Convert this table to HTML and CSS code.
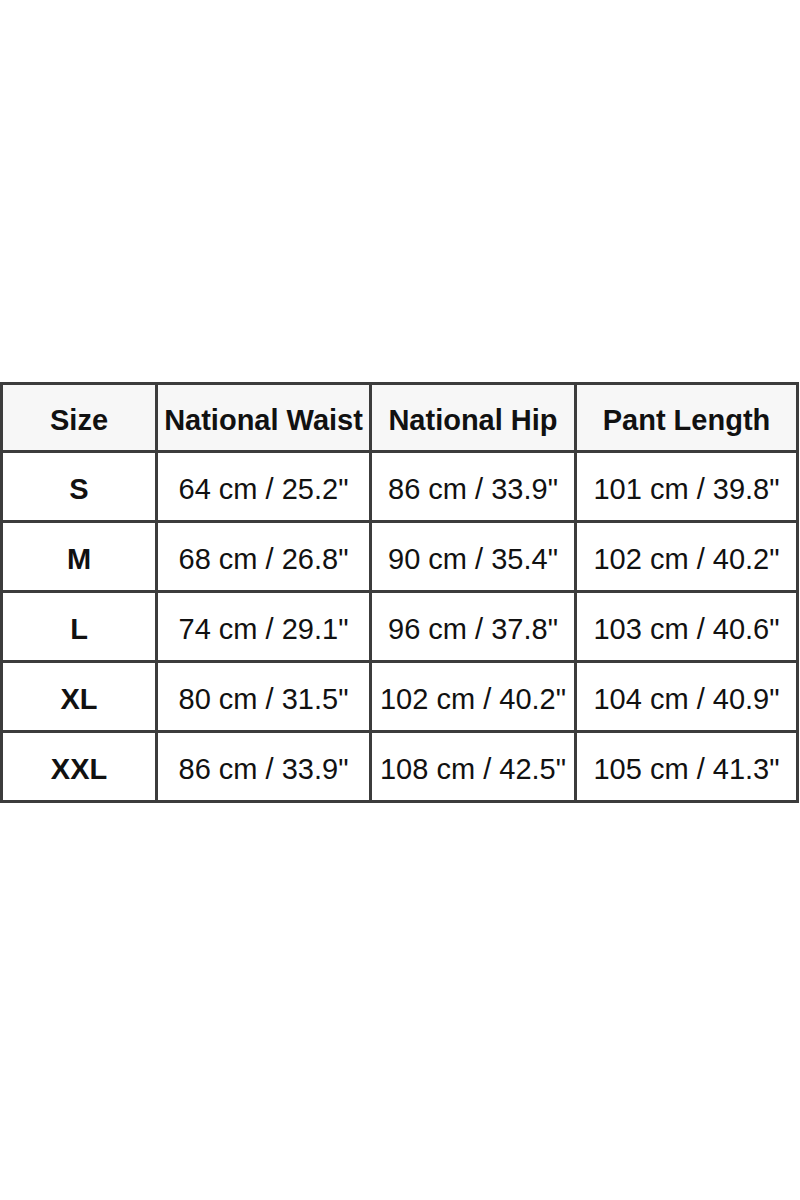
FILE: index.html
```html
<!DOCTYPE html>
<html>
<head>
<meta charset="utf-8">
<link rel="stylesheet" href="styles.css">
</head>
<body>
<div class="page">
  <table class="sizes">
    <colgroup>
      <col class="c1"><col class="c2"><col class="c3"><col class="c4">
    </colgroup>
    <thead>
      <tr><th>Size</th><th>National Waist</th><th>National Hip</th><th>Pant Length</th></tr>
    </thead>
    <tbody>
      <tr><th>S</th><td>64 cm / 25.2"</td><td>86 cm / 33.9"</td><td>101 cm / 39.8"</td></tr>
      <tr><th>M</th><td>68 cm / 26.8"</td><td>90 cm / 35.4"</td><td>102 cm / 40.2"</td></tr>
      <tr><th>L</th><td>74 cm / 29.1"</td><td>96 cm / 37.8"</td><td>103 cm / 40.6"</td></tr>
      <tr><th>XL</th><td>80 cm / 31.5"</td><td>102 cm / 40.2"</td><td>104 cm / 40.9"</td></tr>
      <tr><th>XXL</th><td>86 cm / 33.9"</td><td>108 cm / 42.5"</td><td>105 cm / 41.3"</td></tr>
    </tbody>
  </table>
</div>
</body>
</html>
```
FILE: styles.css
```css
html, body {
  margin: 0;
  padding: 0;
  background: #ffffff;
}
.page {
  width: 800px;
  height: 1200px;
  padding-top: 382px;
  box-sizing: border-box;
}
.sizes {
  border-collapse: collapse;
  table-layout: fixed;
  width: 796px;
  font-family: "Liberation Sans", Arial, sans-serif;
  font-size: 29px;
  color: #111;
}
.c1 { width: 155px; }
.c2 { width: 214px; }
.c3 { width: 205px; }
.c4 { width: 222px; }
.sizes th, .sizes td {
  border: 3px solid #3c3c3c;
  text-align: center;
  vertical-align: middle;
  padding: 6px 0 0 0;
  white-space: nowrap;
  height: 61px;
}
.sizes th { font-weight: bold; }
.sizes td { font-weight: normal; }
.sizes thead th {
  background: #f7f7f7;
  height: 59px;
}
```
